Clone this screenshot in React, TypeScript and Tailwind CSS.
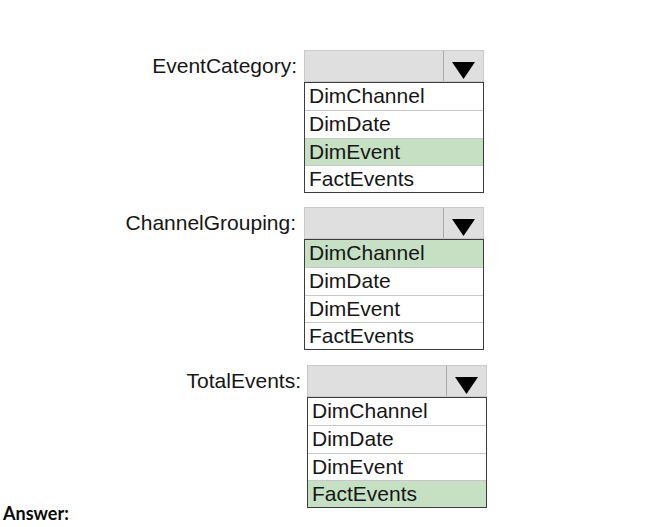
const OPTIONS = ['DimChannel', 'DimDate', 'DimEvent', 'FactEvents']

interface DropdownProps {
  label: string
  labelWidth: string
  gap: string
  selected: string
  top: string
}

function Dropdown({ label, labelWidth, gap, selected, top }: DropdownProps) {
  return (
    <div className={`flex items-start ${top}`}>
      <div className={`${labelWidth} shrink-0 text-right text-[21px] leading-[32px] text-[#161616]`}>
        {label}
      </div>
      <div className={`${gap} w-[180px] shrink-0`}>
        <div className="h-[32px] flex border border-[#c9c9c9] bg-[#dfdfdf]">
          <div className="flex-1 border-r border-[#a9a9a9]" />
          <div className="w-[39px] flex justify-center pt-[11px]">
            <svg width="23" height="17" viewBox="0 0 23 17">
              <polygon points="0,0 23,0 11.5,17" fill="#000" />
            </svg>
          </div>
        </div>
        <div className="border border-[#3c3c3c] bg-white">
          {OPTIONS.map((opt, i) => (
            <div
              key={opt}
              className={`h-[27.25px] pl-[4px] text-[21px] leading-[26px] text-[#161616] ${
                i > 0 ? 'border-t border-[#c8c8c8]' : ''
              } ${opt === selected ? 'bg-[#c5e0c3]' : ''}`}
            >
              {opt}
            </div>
          ))}
        </div>
      </div>
    </div>
  )
}

export default function App() {
  return (
    <div className="w-[661px] h-[527px] bg-white overflow-hidden font-['Liberation_Sans'] pt-[50px]">
      <Dropdown label="EventCategory:" labelWidth="w-[297px]" gap="ml-[7px]" selected="DimEvent" top="" />
      <Dropdown label="ChannelGrouping:" labelWidth="w-[296px]" gap="ml-[8px]" selected="DimChannel" top="mt-[14px]" />
      <Dropdown label="TotalEvents:" labelWidth="w-[301px]" gap="ml-[6px]" selected="FactEvents" top="mt-[15px]" />
      <p className="mt-[-6px] pl-[3px] font-['Lato'] font-bold text-[18px] leading-[22px] text-[#0a0a0a]">
        Answer:
      </p>
    </div>
  )
}
